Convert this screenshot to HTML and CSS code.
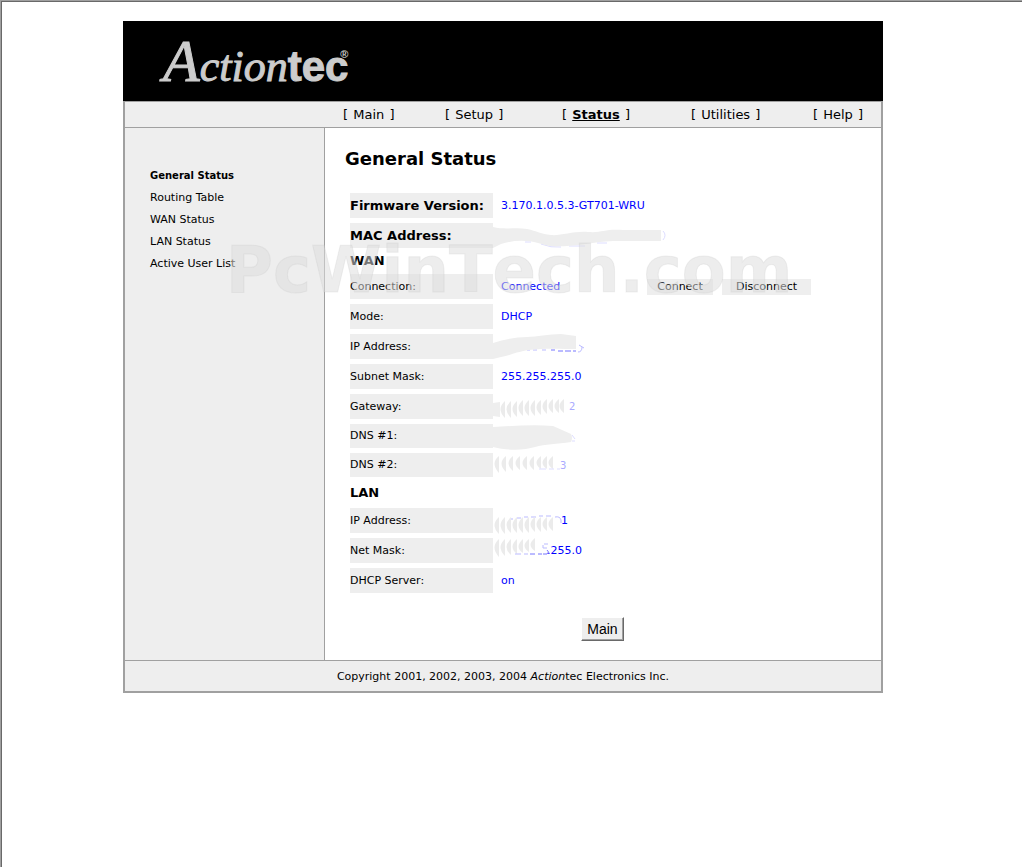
FILE: index.html
```html
<!DOCTYPE html>
<html lang="en">
<head>
  <meta charset="UTF-8">
  <meta name="viewport" content="width=device-width, initial-scale=1">
  <title>Actiontec - General Status</title>
  <link rel="stylesheet" href="styles.css">
</head>
<body>
<div class="page">
  <div class="wrapper">
    <header class="banner">
      <div class="logo"><span class="logo-a">A</span><span class="logo-script">ction</span><span class="logo-bold">tec</span><span class="logo-reg">®</span></div>
    </header>

    <div class="frame">
      <nav class="topnav">
        <span>[ <a href="#">Main</a> ]</span>
        <span>[ <a href="#">Setup</a> ]</span>
        <span>[ <a href="#" class="current">Status</a> ]</span>
        <span>[ <a href="#">Utilities</a> ]</span>
        <span>[ <a href="#">Help</a> ]</span>
      </nav>

      <div class="columns">
        <ul class="sidebar">
          <li><a href="#" class="active">General Status</a></li>
          <li><a href="#">Routing Table</a></li>
          <li><a href="#">WAN Status</a></li>
          <li><a href="#">LAN Status</a></li>
          <li><a href="#">Active User List</a></li>
        </ul>

        <main class="content">
          <h1>General Status</h1>
          <table class="status">
            <tr class="big">
              <th scope="row">Firmware Version:</th>
              <td>3.170.1.0.5.3-GT701-WRU</td>
            </tr>
            <tr class="big">
              <th scope="row">MAC Address:</th>
              <td>
                <svg class="smear" width="180" height="34" viewBox="0 0 180 34">
                  <path class="ink light" d="M32 19h6M48 21q10 4 20 3M76 23h16M104 20h10M170 8q4 4 0 9"/>
                  <path class="soft" d="M0 4C12 7 24 4 34 6S48 11 58 12S80 8 95 9S110 6 130 7H168V18H120C100 19 92 22 74 23S56 23 45 20S20 17 8 21L0 25Z"/>
                </svg>
              </td>
            </tr>
            <tr class="section">
              <th colspan="2" scope="rowgroup">WAN</th>
            </tr>
            <tr>
              <th scope="row">Connection:</th>
              <td><div class="connection"><span>Connected</span><button type="button" class="flat connect">Connect</button><button type="button" class="flat disconnect">Disconnect</button></div></td>
            </tr>
            <tr>
              <th scope="row">Mode:</th>
              <td>DHCP</td>
            </tr>
            <tr>
              <th scope="row">IP Address:</th>
              <td>
                <svg class="smear" width="180" height="34" viewBox="0 0 180 34">
                  <path class="ink" d="M34 16h3M40 16h4M49 16h4M85 18q4 0 4-5M86 11l5 3"/>
                  <path class="ink strong" d="M58 16h4M65 17h5M72 17h6M80 17h3"/>
                  <path class="soft" d="M0 9C12 5 24 3 34 3S55 0 68 0L83 2V15C70 15 50 14 36 16S16 22 8 23L0 25Z"/>
                </svg>
              </td>
            </tr>
            <tr>
              <th scope="row">Subnet Mask:</th>
              <td>255.255.255.0</td>
            </tr>
            <tr>
              <th scope="row">Gateway:</th>
              <td>
                <svg class="smear" width="180" height="34" viewBox="0 0 180 34">
                  <path class="soft" d="M0 9l7-1V23l-7-1z"/>
                  <g class="dabs">
                    <path d="M12 7q-9 8 0 17zM18 7q-9 8 0 17zM24 7q-9 8 0 16zM30 6q-9 8 0 16zM36 6q-9 8 0 16zM42 6q-9 8 0 16zM48 6q-9 7 0 15zM54 5q-9 7 0 15zM60 5q-9 7 0 14zM66 5q-9 7 0 14zM71 5q-9 7 0 14z"/>
                  </g>
                  <text class="faint" x="76" y="16">2</text>
                </svg>
              </td>
            </tr>
            <tr class="short">
              <th scope="row">DNS #1:</th>
              <td>
                <svg class="smear" width="180" height="34" viewBox="0 0 180 34">
                  <path class="ink light" d="M79 11l3 4M79 17h3"/>
                  <path class="soft" d="M0 3C20 2 40 0 60 2L78 10Q80 14 78 18C64 20 52 20 42 23S16 27 0 23Z"/>
                </svg>
              </td>
            </tr>
            <tr class="short">
              <th scope="row">DNS #2:</th>
              <td>
                <svg class="smear" width="180" height="34" viewBox="0 0 180 34">
                  <g class="dabs">
                    <path d="M6 3q-9 7 0 17zM13 3q-9 7 0 16zM20 3q-9 7 0 15zM27 3q-9 7 0 14zM34 3q-9 7 0 14zM41 3q-9 7 0 14zM48 3q-9 7 0 13zM54 3q-9 7 0 13zM60 3q-9 7 0 13z"/>
                  </g>
                  <path class="ink light" d="M46 16h7M56 16h5M64 16h3"/>
                  <text class="faint" x="67" y="16">3</text>
                </svg>
              </td>
            </tr>
            <tr class="section lan">
              <th colspan="2" scope="rowgroup">LAN</th>
            </tr>
            <tr>
              <th scope="row">IP Address:</th>
              <td>
                <svg class="smear" width="180" height="34" viewBox="0 0 180 34">
                  <path class="ink" d="M17 11h3M24 10h4M31 9h4M38 9h5M46 8h4M53 8h5M62 9q5-1 6 3v3"/>
                  <g class="dabs">
                    <path d="M6 9q-9 8 0 17zM12 9q-9 8 0 17zM18 9q-9 8 0 16zM24 9q-9 8 0 16zM30 9q-9 8 0 16zM36 9q-9 8 0 16zM42 9q-9 7 0 15zM48 9q-9 7 0 15zM54 9q-9 7 0 14zM60 9q-9 7 0 14z"/>
                  </g>
                </svg>
                <span class="ip-tail">1</span>
              </td>
            </tr>
            <tr>
              <th scope="row">Net Mask:</th>
              <td>
                <svg class="smear" width="180" height="34" viewBox="0 0 180 34">
                  <g class="dabs">
                    <path d="M6 1q-9 8 0 18zM12 1q-9 8 0 17zM18 1q-9 8 0 16zM24 1q-9 8 0 15zM30 1q-9 8 0 14zM36 1q-9 7 0 13zM42 0q-9 7 0 13z"/>
                  </g>
                  <path class="ink" d="M22 16h6M31 16h4M51 6h4M50 7v3h4"/>
                  <path class="ink strong" d="M37 16h5M45 16h4M50 16h4q3-2 0-4"/>
                </svg>
                <span class="mask-tail">.255.0</span>
              </td>
            </tr>
            <tr>
              <th scope="row">DHCP Server:</th>
              <td>on</td>
            </tr>
          </table>
          <button type="button" class="main-button">Main</button>
        </main>
      </div>

      <footer>Copyright 2001, 2002, 2003, 2004 <i>Action</i>tec Electronics Inc.</footer>
    </div>

    <div class="watermark">PcWinTech.com</div>
  </div>
</div>
</body>
</html>
```
FILE: styles.css
```css
* {
  box-sizing: border-box;
}
body {
  margin: 0;
  border-top: 1px solid #a0a0a0;
  border-left: 1px solid #a0a0a0;
  background: #fff;
  color: #000;
  font-family: Verdana, "DejaVu Sans", sans-serif;
  font-size: 11px;
}
a {
  color: #000;
  text-decoration: none;
}
.page {
  min-height: calc(100vh - 1px);
  padding: 19px 18px 19px 0;
  border-top: 1px solid #696969;
  border-left: 1px solid #696969;
}
.wrapper {
  position: relative;
  max-width: 760px;
  margin: 0 auto;
}

/* banner */
.banner {
  height: 80px;
  padding: 8px 0 0 40px;
  background: #000;
}
.logo {
  display: flex;
  align-items: baseline;
  color: #ccc;
  line-height: 64px;
}
.logo-a,
.logo-script {
  font-family: "Liberation Serif", serif;
  font-style: italic;
  -webkit-text-stroke: 1px #ccc;
}
.logo-a {
  font-size: 60px;
}
.logo-script {
  font-size: 44px;
}
.logo-bold {
  font-family: "Liberation Sans", sans-serif;
  font-size: 42px;
  font-weight: bold;
  -webkit-text-stroke: 1px #ccc;
}
.logo-reg {
  align-self: flex-start;
  margin-left: -8px;
  font-family: "Liberation Sans", sans-serif;
  font-size: 11px;
  font-weight: bold;
  line-height: 50px;
}

.frame {
  border: 2px solid #a0a0a0;
  border-top-width: 1px;
}

/* top menu */
.topnav {
  display: grid;
  grid-template-columns: 102px 117px 129px 122px auto;
  height: 26px;
  padding-left: 218px;
  border-bottom: 1px solid #a0a0a0;
  background: #eee;
  font-size: 13px;
  line-height: 25px;
  white-space: nowrap;
}
.topnav a {
  margin: 0 1px;
}
.topnav .current {
  font-weight: bold;
  text-decoration: underline;
}

.columns {
  display: flex;
}
.sidebar {
  flex: 0 0 200px;
  margin: 0;
  padding: 37px 0 0 25px;
  border-right: 1px solid #a0a0a0;
  background: #eee;
  list-style: none;
  line-height: 22px;
}
.sidebar .active {
  font-size: 10px;
  font-weight: bold;
}

.content {
  flex: 1;
  padding: 19px 20px 19px;
}
h1 {
  margin: 0 0 17px;
  font-size: 18px;
  line-height: 24px;
}

/* status table */
.status {
  border-spacing: 5px;
}
.status th,
.status td {
  height: 25px;
  padding: 0;
  line-height: 16px;
}
.status th {
  width: 143px;
  background: #eee;
  font-weight: normal;
  text-align: left;
}
.status td {
  position: relative;
  padding-left: 3px;
  color: #00f;
}
.status .big th {
  font-size: 13px;
  font-weight: bold;
}
.status .short th,
.status .short td {
  height: 24px;
}
.status .section th {
  height: 16px;
  background: none;
  font-size: 13px;
  font-weight: bold;
}
.status .lan th {
  height: 21px;
}
.connection {
  display: flex;
  align-items: center;
}
.connection span {
  width: 146px;
}
.flat {
  height: 16px;
  padding: 0;
  border: 0;
  background: #eee;
  color: #000;
  font: 11px/14px Verdana, "DejaVu Sans", sans-serif;
}
.connect {
  width: 66px;
  margin-right: 9px;
}
.disconnect {
  width: 89px;
}
.ip-tail {
  padding-left: 60px;
}
.mask-tail {
  padding-left: 46px;
}

/* brush strokes over the private values */
.smear {
  position: absolute;
  top: 0;
  left: -5px;
}
.soft {
  fill: #eee;
}
.dabs {
  fill: #ebebeb;
}
.ink {
  fill: none;
  stroke: #bbf;
}
.light {
  stroke: #ddf;
}
.strong {
  stroke: #77f;
}
.faint {
  fill: #aaf;
  font-size: 10px;
}

.main-button {
  display: block;
  width: 43px;
  height: 24px;
  margin: 19px auto 0 236px;
  padding: 0;
  border: 1px solid;
  border-color: #fff #696969 #696969 #fff;
  background: #eee;
  box-shadow: inset -1px -1px #a0a0a0;
  color: #000;
  font: 14px/20px "Liberation Sans", Arial, sans-serif;
}

footer {
  height: 31px;
  border-top: 1px solid #a0a0a0;
  background: #eee;
  line-height: 31px;
  text-align: center;
}

.watermark {
  position: absolute;
  top: 212px;
  left: 103px;
  color: rgba(221, 221, 221, 0.53);
  font: bold 64px/74px Verdana, "DejaVu Sans", sans-serif;
  font-kerning: none;
  -webkit-text-stroke: 1px rgba(190, 190, 190, 0.2);
  pointer-events: none;
}
```
